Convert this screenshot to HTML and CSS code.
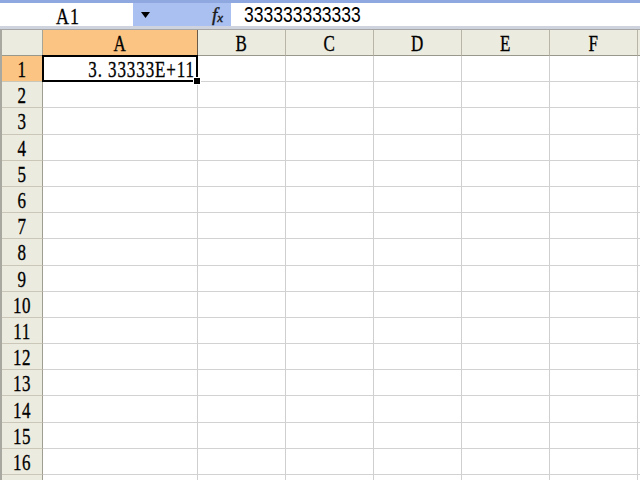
FILE: index.html
```html
<!DOCTYPE html>
<html>
<head>
<meta charset="utf-8">
<link rel="stylesheet" href="styles.css">
</head>
<body>
<div class="app">
  <div class="fbar">
    <div class="fbar-row">
      <div class="namebox"><span class="tall">A1</span></div>
      <div class="dd"><svg width="9" height="6" viewBox="0 0 9 6"><path d="M0 0H9L4.5 6Z" fill="#000"/></svg></div>
      <div class="fx"><span class="f">f</span><span class="x">x</span></div>
      <div class="input"><span class="tall2">333333333333</span></div>
    </div>
    <div class="fbar-bottom"></div>
  </div>
  <div class="sheet">
    <div class="row hdr">
      <div class="corner"></div>
      <div class="ch sel"><span class="tall">A</span></div>
      <div class="ch"><span class="tall">B</span></div>
      <div class="ch"><span class="tall">C</span></div>
      <div class="ch"><span class="tall">D</span></div>
      <div class="ch"><span class="tall">E</span></div>
      <div class="ch"><span class="tall">F</span></div>
      <div class="ch end"></div>
    </div>
    <div class="row"><div class="rh sel"><span class="tall">1</span></div><div class="c a active"><span class="tall val">3.&nbsp;33333E+11</span></div><div class="c"></div><div class="c"></div><div class="c"></div><div class="c"></div><div class="c"></div><div class="c end"></div></div>
    <div class="row"><div class="rh"><span class="tall">2</span></div><div class="c a"></div><div class="c"></div><div class="c"></div><div class="c"></div><div class="c"></div><div class="c"></div><div class="c end"></div></div>
    <div class="row"><div class="rh"><span class="tall">3</span></div><div class="c a"></div><div class="c"></div><div class="c"></div><div class="c"></div><div class="c"></div><div class="c"></div><div class="c end"></div></div>
    <div class="row"><div class="rh"><span class="tall">4</span></div><div class="c a"></div><div class="c"></div><div class="c"></div><div class="c"></div><div class="c"></div><div class="c"></div><div class="c end"></div></div>
    <div class="row"><div class="rh"><span class="tall">5</span></div><div class="c a"></div><div class="c"></div><div class="c"></div><div class="c"></div><div class="c"></div><div class="c"></div><div class="c end"></div></div>
    <div class="row"><div class="rh"><span class="tall">6</span></div><div class="c a"></div><div class="c"></div><div class="c"></div><div class="c"></div><div class="c"></div><div class="c"></div><div class="c end"></div></div>
    <div class="row"><div class="rh"><span class="tall">7</span></div><div class="c a"></div><div class="c"></div><div class="c"></div><div class="c"></div><div class="c"></div><div class="c"></div><div class="c end"></div></div>
    <div class="row"><div class="rh"><span class="tall">8</span></div><div class="c a"></div><div class="c"></div><div class="c"></div><div class="c"></div><div class="c"></div><div class="c"></div><div class="c end"></div></div>
    <div class="row"><div class="rh"><span class="tall">9</span></div><div class="c a"></div><div class="c"></div><div class="c"></div><div class="c"></div><div class="c"></div><div class="c"></div><div class="c end"></div></div>
    <div class="row"><div class="rh"><span class="tall">10</span></div><div class="c a"></div><div class="c"></div><div class="c"></div><div class="c"></div><div class="c"></div><div class="c"></div><div class="c end"></div></div>
    <div class="row"><div class="rh"><span class="tall">11</span></div><div class="c a"></div><div class="c"></div><div class="c"></div><div class="c"></div><div class="c"></div><div class="c"></div><div class="c end"></div></div>
    <div class="row"><div class="rh"><span class="tall">12</span></div><div class="c a"></div><div class="c"></div><div class="c"></div><div class="c"></div><div class="c"></div><div class="c"></div><div class="c end"></div></div>
    <div class="row"><div class="rh"><span class="tall">13</span></div><div class="c a"></div><div class="c"></div><div class="c"></div><div class="c"></div><div class="c"></div><div class="c"></div><div class="c end"></div></div>
    <div class="row"><div class="rh"><span class="tall">14</span></div><div class="c a"></div><div class="c"></div><div class="c"></div><div class="c"></div><div class="c"></div><div class="c"></div><div class="c end"></div></div>
    <div class="row"><div class="rh"><span class="tall">15</span></div><div class="c a"></div><div class="c"></div><div class="c"></div><div class="c"></div><div class="c"></div><div class="c"></div><div class="c end"></div></div>
    <div class="row"><div class="rh"><span class="tall">16</span></div><div class="c a"></div><div class="c"></div><div class="c"></div><div class="c"></div><div class="c"></div><div class="c"></div><div class="c end"></div></div>
    <div class="row"><div class="rh"></div><div class="c a"></div><div class="c"></div><div class="c"></div><div class="c"></div><div class="c"></div><div class="c"></div><div class="c end"></div></div>
  </div>
</div>
</body>
</html>
```
FILE: styles.css
```css
* { box-sizing: border-box; }
html, body { margin: 0; padding: 0; }
body { width: 640px; height: 480px; overflow: hidden; background: #fff; }
.app { width: 640px; height: 480px; overflow: hidden; display: flex; flex-direction: column; }

.fbar { background: #a9c0f0; border-top: 3px solid #8fa8df; flex: none; }
.fbar-row { display: flex; height: 23px; }
.fbar-bottom { height: 4px; background: #cfd3dd; border-bottom: 1px solid #a6a6a6; }
.namebox { width: 133px; background: #fff; display: flex; align-items: center; padding-left: 56px; padding-top: 3px;
  font-family: "Liberation Serif", serif; font-size: 18px; letter-spacing: 1px; color: #000;
  -webkit-text-stroke: 0.25px #000; }
.dd { width: 79px; display: flex; align-items: center; padding-left: 8px; }
.fx { width: 19px; display: flex; align-items: center; font-family: "Liberation Serif", serif; font-style: italic;
  color: #1a1a1a; line-height: 1; -webkit-text-stroke: 0.4px #1a1a1a; }
.fx .f { font-size: 19px; }
.fx .x { font-size: 13px; margin-top: 5px; }
.input { flex: 1; background: #fff; display: flex; align-items: center; padding-left: 13px; padding-top: 2px;
  font-family: "Liberation Sans", Arial, sans-serif; font-size: 17.5px; color: #000; }

.tall { display: inline-block; transform: scaleY(1.3); }
.tall2 { display: inline-block; transform: scaleY(1.22); }

.sheet { flex: 1; display: flex; flex-direction: column; border-left: 2px solid #a8a8a0; }
.row { display: flex; height: 26.2px; flex: none; }
.row.hdr { height: 26px; }

.corner, .ch, .rh, .c { height: 100%; display: flex; align-items: center; padding-top: 3px;
  font-family: "Liberation Serif", serif; font-size: 17px; letter-spacing: 0.5px; color: #000;
  -webkit-text-stroke: 0.25px #000; }
.corner { width: 41px; background: #ecebdf; border-right: 1px solid #a7a596; border-bottom: 1px solid #9a988a; }
.ch { width: 88px; justify-content: center; background: #ecebdf; border-right: 1px solid #b8b5a7; border-bottom: 1px solid #9a988a; }
.ch.sel { width: 155px; background: #fbc482; border-right-color: #6b5a45; }
.rh { width: 41px; justify-content: center; background: #ecebdf; border-right: 1px solid #a09e90; border-bottom: 1px solid #cac7b8; }
.rh.sel { background: #fbc482; }
.c { width: 88px; border-right: 1px solid #cfcfcf; border-bottom: 1px solid #d2d2d2; }
.c.a { width: 155px; justify-content: flex-end; padding-right: 2px; }
.ch.end, .c.end { width: 2px; flex: 1; border-right: none; }
.val { letter-spacing: 0.9px; }

.active { position: relative; }
.active::after { content: ""; position: absolute; left: -1px; top: -1px; right: -1px; bottom: -1px; border: 2px solid #000; }
.active::before { content: ""; position: absolute; right: -4px; bottom: -4px; width: 6px; height: 6px; background: #000;
  border: 1px solid #fff; z-index: 2; }
```
